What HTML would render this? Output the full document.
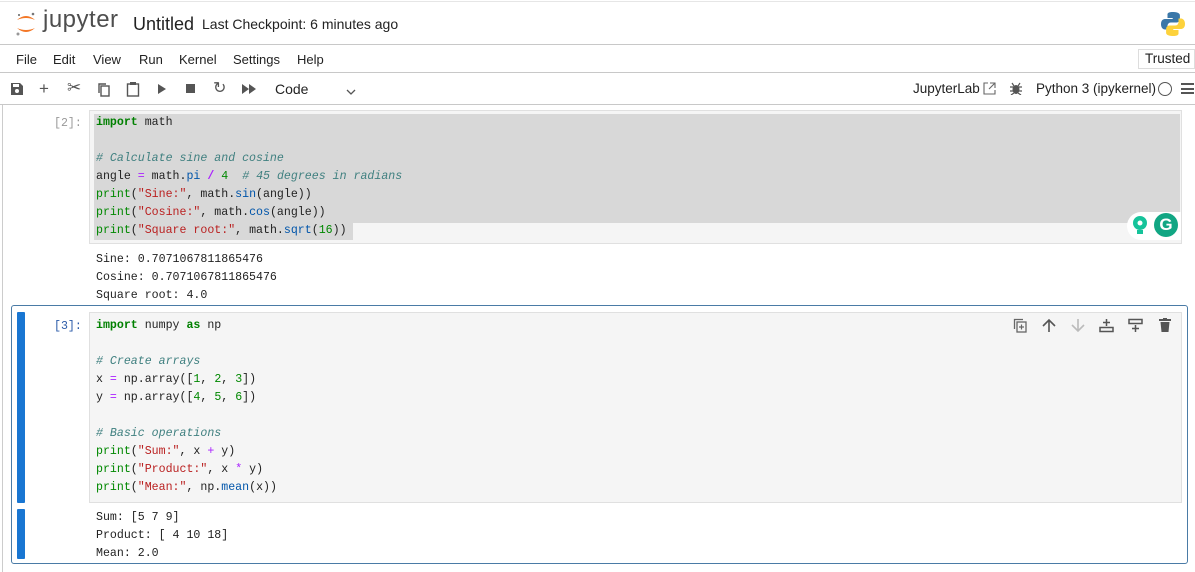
<!DOCTYPE html>
<html><head><meta charset="utf-8"><style>
*{margin:0;padding:0;box-sizing:border-box}
body{width:1195px;height:572px;overflow:hidden;background:#fff;font-family:"Liberation Sans",sans-serif;color:#212121;position:relative}
.abs{position:absolute}
.hl{position:absolute;height:1px;background:#c8c8c8;left:0;width:1195px}
.menu span{position:absolute;top:52px;font-size:13px;color:#222}
.mono{font-family:"Liberation Mono",monospace;font-size:11.6px;white-space:pre;position:absolute;left:96px;line-height:18px;color:#222}
.k{color:#008000;font-weight:bold}.c{color:#408080;font-style:italic}.s{color:#ba2121}.f{color:#0055aa}.n{color:#080}.o{color:#aa22ff}
.prompt{position:absolute;font-family:"Liberation Mono",monospace;font-size:11.6px;color:#999}
.ic{position:absolute;top:80px}
</style></head><body>
<div class="hl" style="top:1px;background:#e6e6e6"></div>
<svg class="abs" style="left:14px;top:10px" width="24" height="28" viewBox="0 0 24 28">
<path d="M3 10 Q12 2 21 10 Q12 6 3 10Z" fill="#f37726"/>
<path d="M3 18 Q12 26 21 18 Q12 22 3 18Z" fill="#f37726"/>
<circle cx="19" cy="4" r="1.3" fill="#767677"/><circle cx="4" cy="24" r="1.5" fill="#989798"/><circle cx="5" cy="5" r="1" fill="#616262"/>
</svg>
<div class="abs" style="left:43px;top:6px;font-size:24px;color:#4e4e4e;letter-spacing:0.5px">jupyter</div>
<div class="abs" style="left:133px;top:14px;font-size:18px;color:#222">Untitled</div>
<div class="abs" style="left:202px;top:16px;font-size:14px;color:#222">Last Checkpoint: 6 minutes ago</div>
<svg class="abs" style="left:1160px;top:11px" width="26" height="26" viewBox="0 0 26 26">
<path d="M12.5 1C7 1 7.5 3.5 7.5 3.5V7h5.2v1H5.5S1 7.5 1 13s4 5.5 4 5.5h2.5v-3.2S7.3 11.5 11 11.5h5.3s3.6 0 3.6-3.5V4.3S20.4 1 12.5 1z" fill="#3b77a8"/>
<path d="M13.5 25c5.5 0 5-2.5 5-2.5V19h-5.2v-1h7.2S25 18.5 25 13s-4-5.5-4-5.5h-2.5v3.2s.2 3.8-3.5 3.8H9.7s-3.6 0-3.6 3.5v3.7S5.6 25 13.5 25z" fill="#fdd23c"/>
</svg>
<div class="hl" style="top:44px"></div>
<div class="menu"><span style="left:16px">File</span><span style="left:53px">Edit</span><span style="left:93px">View</span><span style="left:139px">Run</span><span style="left:179px">Kernel</span><span style="left:233px">Settings</span><span style="left:297px">Help</span></div>
<div class="abs" style="left:1138px;top:49px;width:57px;height:20px;border:1px solid #ddd;font-size:13.5px;padding:1px 0 0 6px">Trusted</div>
<div class="hl" style="top:72px"></div>
<svg class="ic" style="left:10px;top:82px" width="14" height="14" viewBox="0 0 14 14"><path d="M1 1h9l3 3v9H1z" fill="#555"/><rect x="3" y="2" width="6" height="3" fill="#fff"/><circle cx="7" cy="9" r="2" fill="#fff"/></svg>
<div class="abs" style="left:39px;top:79px;font-size:17px;color:#555">+</div>
<div class="abs" style="left:67px;top:78px;font-size:17px;color:#555">✂</div>
<svg class="ic" style="left:97px;top:82px" width="14" height="15" viewBox="0 0 14 15"><rect x="4" y="4" width="8" height="10" fill="none" stroke="#555" stroke-width="1.4"/><path d="M2 11V2h7" fill="none" stroke="#555" stroke-width="1.4"/></svg>
<svg class="ic" style="left:126px;top:81px" width="14" height="16" viewBox="0 0 14 16"><rect x="1.5" y="3" width="11" height="12" fill="none" stroke="#555" stroke-width="1.4"/><rect x="4" y="1" width="6" height="3" fill="#555"/></svg>
<svg class="ic" style="left:157px;top:84px" width="10" height="10"><path d="M1 0L9 5L1 10Z" fill="#555"/></svg>
<div class="abs" style="left:186px;top:84px;width:9px;height:9px;background:#555"></div>
<div class="abs" style="left:213px;top:78px;font-size:16px;color:#555">↻</div>
<svg class="ic" style="left:242px;top:84px" width="14" height="10"><path d="M0 0L7 5L0 10ZM7 0L14 5L7 10Z" fill="#555"/></svg>
<div class="abs" style="left:275px;top:81px;font-size:14px;color:#222">Code</div>
<svg class="abs" style="left:346px;top:89px" width="10" height="6"><path d="M1 1L5 5L9 1" fill="none" stroke="#555" stroke-width="1.3"/></svg>
<div class="abs" style="left:913px;top:81px;font-size:13.5px;color:#222">JupyterLab</div>
<svg class="abs" style="left:983px;top:82px" width="13" height="13"><path d="M5 1H1v11h11V8M7 1h5v5M12 1L6 7" fill="none" stroke="#666" stroke-width="1.1"/></svg>
<svg class="abs" style="left:1010px;top:82px" width="12" height="13"><ellipse cx="6" cy="7.5" rx="3.5" ry="4.5" fill="#555"/><path d="M0 5h12M0 9h12M1 13l3-2M11 13l-3-2M2 1l2 3M10 1l-2 3" stroke="#555" stroke-width="1.2"/></svg>
<div class="abs" style="left:1036px;top:81px;font-size:13.5px;color:#222">Python 3 (ipykernel)</div>
<div class="abs" style="left:1158px;top:82px;width:14px;height:14px;border:1.3px solid #555;border-radius:50%;background:#fff"></div>
<div class="abs" style="left:1181px;top:83px;width:13px;height:11px;border-top:2px solid #555;border-bottom:2px solid #555"><div style="margin-top:2.5px;height:2px;background:#555"></div></div>
<div class="hl" style="top:104px"></div>
<div class="abs" style="left:2px;top:105px;width:1px;height:467px;background:#ccc"></div>
<div class="prompt" style="left:54px;top:117px">[2]:</div>
<div class="abs" style="left:89px;top:110px;width:1093px;height:134px;background:#f5f5f5;border:1px solid #e0e0e0"></div>
<div class="abs" style="left:94px;top:114px;width:1086px;height:109px;background:#d8d8d8"></div>
<div class="abs" style="left:94px;top:222px;width:259px;height:18px;background:#d8d8d8"></div>
<div class="mono" style="top:114px"><span class="k">import</span> math

<span class="c"># Calculate sine and cosine</span>
angle <span class="o">=</span> math.<span class="f">pi</span> <span class="o"><b>/</b></span> <span class="n">4</span>  <span class="c"># 45 degrees in radians</span>
<span class="n">print</span>(<span class="s">"Sine:"</span>, math.<span class="f">sin</span>(angle))
<span class="n">print</span>(<span class="s">"Cosine:"</span>, math.<span class="f">cos</span>(angle))
<span class="n">print</span>(<span class="s">"Square root:"</span>, math.<span class="f">sqrt</span>(<span class="n">16</span>))</div>
<div class="abs" style="left:1127px;top:212px;width:54px;height:28px;background:#fff;border-radius:14px 0 0 14px"></div>
<svg class="abs" style="left:1131px;top:215px" width="18" height="22"><circle cx="9" cy="8" r="7" fill="#15c39a"/><circle cx="9" cy="8" r="2.5" fill="#fff"/><rect x="6" y="15" width="6" height="4" fill="#15c39a"/></svg>
<div class="abs" style="left:1154px;top:213px;width:24px;height:24px;border-radius:50%;background:#11a683;color:#fff;font-weight:bold;font-size:17px;text-align:center;line-height:24px">G</div>
<div class="mono" style="top:251px">Sine: 0.7071067811865476
Cosine: 0.7071067811865476
Square root: 4.0</div>
<div class="abs" style="left:11px;top:305px;width:1177px;height:259px;border:1px solid #4a7ba6;border-radius:3px"></div>
<div class="abs" style="left:17px;top:312px;width:8px;height:191px;background:#1976d2;border-radius:1px"></div>
<div class="abs" style="left:17px;top:509px;width:8px;height:50px;background:#1976d2;border-radius:1px"></div>
<div class="prompt" style="left:54px;top:320px;color:#2a5aa8">[3]:</div>
<div class="abs" style="left:89px;top:312px;width:1093px;height:191px;background:#f5f5f5;border:1px solid #e0e0e0"></div>
<div class="mono" style="top:317px"><span class="k">import</span> numpy <span class="k">as</span> np

<span class="c"># Create arrays</span>
x <span class="o">=</span> np.array([<span class="n">1</span>, <span class="n">2</span>, <span class="n">3</span>])
y <span class="o">=</span> np.array([<span class="n">4</span>, <span class="n">5</span>, <span class="n">6</span>])

<span class="c"># Basic operations</span>
<span class="n">print</span>(<span class="s">"Sum:"</span>, x <span class="o">+</span> y)
<span class="n">print</span>(<span class="s">"Product:"</span>, x <span class="o">*</span> y)
<span class="n">print</span>(<span class="s">"Mean:"</span>, np.<span class="f">mean</span>(x))</div>
<div class="mono" style="top:509px">Sum: [5 7 9]
Product: [ 4 10 18]
Mean: 2.0</div>
<svg class="abs" style="left:1013px;top:318px" width="14" height="15"><rect x="4" y="4" width="9" height="10" fill="none" stroke="#666" stroke-width="1.3"/><path d="M1.5 11V1.5H10" fill="none" stroke="#666" stroke-width="1.3"/><path d="M8.5 6.5v5M6 9h5" stroke="#666" stroke-width="1.2"/></svg>
<svg class="abs" style="left:1042px;top:318px" width="14" height="15"><path d="M7 14V2M1 8l6-6 6 6" fill="none" stroke="#555" stroke-width="1.6"/></svg>
<svg class="abs" style="left:1071px;top:318px" width="14" height="15"><path d="M7 1v12M1 7l6 6 6-6" fill="none" stroke="#bbb" stroke-width="1.6"/></svg>
<svg class="abs" style="left:1099px;top:318px" width="15" height="15"><path d="M7.5 1v7M4 4.5h7" stroke="#555" stroke-width="1.5"/><rect x="1" y="9.5" width="13" height="4" fill="none" stroke="#555" stroke-width="1.5"/></svg>
<svg class="abs" style="left:1128px;top:318px" width="15" height="15"><rect x="1" y="1.5" width="13" height="4" fill="none" stroke="#555" stroke-width="1.5"/><path d="M7.5 7v7M4 10.5h7" stroke="#555" stroke-width="1.5"/></svg>
<svg class="abs" style="left:1159px;top:318px" width="12" height="14"><rect x="0" y="1" width="12" height="2" fill="#555"/><rect x="4" y="0" width="4" height="2" fill="#555"/><path d="M1.5 4h9l-1 10h-7z" fill="#555"/></svg>
</body></html>
